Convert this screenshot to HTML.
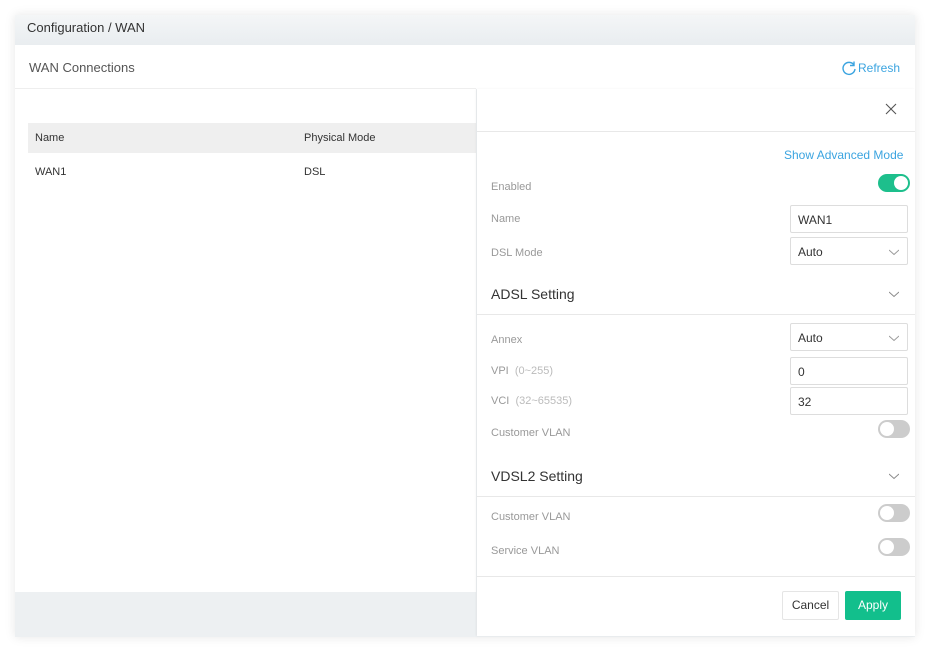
<!DOCTYPE html>
<html><head><meta charset="utf-8"><style>
*{box-sizing:border-box;margin:0;padding:0}
body{width:931px;height:652px;background:#fff;font-family:"Liberation Sans",sans-serif;position:relative;overflow:hidden;color:#333}
.a{position:absolute}
.lbl{position:absolute;left:491px;font-size:11px;color:#999}
.inp{position:absolute;left:790px;width:118px;height:28px;border:1px solid #ddd;border-radius:2px;font-size:12px;color:#333;padding:7px 7px}
.tog{position:absolute;left:878px;width:32px;height:18px;border-radius:9px;background:#ccc}
.tog:after{content:"";position:absolute;left:2px;top:2px;width:14px;height:14px;border-radius:50%;background:#fff}
.tog.on{background:#1dbf8c}.tog.on:after{left:16px}
.chev{position:absolute;width:10px;height:10px}
.hr{position:absolute;left:477px;width:438px;height:1px;background:#e8e8e8}
.sec{position:absolute;left:491px;font-size:14px;color:#333}
</style></head><body>
<div class="a" style="left:15px;top:15px;width:900px;height:622px;box-shadow:0 0 10px rgba(0,0,0,.10)"></div>
<div class="a" style="left:15px;top:15px;width:900px;height:622px;background:#edf0f2"></div>
<div class="a" style="left:15px;top:15px;width:900px;height:30px;background:linear-gradient(#f4f6f7,#e9edf0)"></div>
<div class="a" style="left:27px;top:20px;font-size:13px;color:#333">Configuration / WAN</div>
<div class="a" style="left:15px;top:45px;width:900px;height:44px;background:#fff"></div>
<div class="a" style="left:29px;top:60px;font-size:13px;color:#555">WAN Connections</div>
<svg class="a" style="left:841px;top:60px" width="16" height="16" viewBox="0 0 16 16"><path d="M13 5A6 6 0 1 0 14 9" fill="none" stroke="#3ba4e0" stroke-width="1.4"/><path d="M13 1.5V5.5H9" fill="none" stroke="#3ba4e0" stroke-width="1.4"/></svg>
<div class="a" style="left:858px;top:61px;font-size:12px;color:#3ba4e0">Refresh</div>
<div class="a" style="left:15px;top:88px;width:461px;height:504px;background:#fff;border-top:1px solid #eee"></div>
<div class="a" style="left:28px;top:123px;width:448px;height:30px;background:#efefef"></div>
<div class="a" style="left:35px;top:132px;font-size:11px;color:#333">Name</div>
<div class="a" style="left:304px;top:132px;font-size:11px;color:#333">Physical Mode</div>
<div class="a" style="left:35px;top:166px;font-size:11px;color:#333">WAN1</div>
<div class="a" style="left:304px;top:166px;font-size:11px;color:#333">DSL</div>
<div class="a" style="left:477px;top:89px;width:438px;height:547px;background:#fff;box-shadow:-1px 0 2px rgba(0,0,0,.05)"></div>
<svg class="a" style="left:885px;top:103px" width="12" height="12" viewBox="0 0 12 12"><path d="M1 1L11 11M11 1L1 11" stroke="#555" stroke-width="1.1"/></svg>
<div class="hr" style="top:131px"></div>
<div class="a" style="left:784px;top:148px;font-size:12px;color:#3ba4e0">Show Advanced Mode</div>
<div class="lbl" style="top:181px">Enabled</div>
<div class="tog on" style="top:174px"></div>
<div class="lbl" style="top:213px">Name</div>
<div class="inp" style="top:205px">WAN1</div>
<div class="lbl" style="top:247px">DSL Mode</div>
<div class="inp" style="top:237px">Auto</div>
<svg class="chev" style="left:889px;top:247px" viewBox="0 0 10 10"><path d="M0 3L5 7.5L10 3" fill="none" stroke="#999"/></svg>
<div class="sec" style="top:286px">ADSL Setting</div>
<svg class="chev" style="left:889px;top:289px" viewBox="0 0 10 10"><path d="M0 3L5 7.5L10 3" fill="none" stroke="#888"/></svg>
<div class="hr" style="top:314px"></div>
<div class="lbl" style="top:334px">Annex</div>
<div class="inp" style="top:323px">Auto</div>
<svg class="chev" style="left:889px;top:333px" viewBox="0 0 10 10"><path d="M0 3L5 7.5L10 3" fill="none" stroke="#999"/></svg>
<div class="lbl" style="top:365px">VPI <span style="color:#bbb">&nbsp;(0~255)</span></div>
<div class="inp" style="top:357px">0</div>
<div class="lbl" style="top:395px">VCI <span style="color:#bbb">&nbsp;(32~65535)</span></div>
<div class="inp" style="top:387px">32</div>
<div class="lbl" style="top:427px">Customer VLAN</div>
<div class="tog" style="top:420px"></div>
<div class="sec" style="top:468px">VDSL2 Setting</div>
<svg class="chev" style="left:889px;top:471px" viewBox="0 0 10 10"><path d="M0 3L5 7.5L10 3" fill="none" stroke="#888"/></svg>
<div class="hr" style="top:496px"></div>
<div class="lbl" style="top:511px">Customer VLAN</div>
<div class="tog" style="top:504px"></div>
<div class="lbl" style="top:545px">Service VLAN</div>
<div class="tog" style="top:538px"></div>
<div class="hr" style="top:576px"></div>
<div class="a" style="left:782px;top:591px;width:57px;height:29px;border:1px solid #e5e5e5;border-radius:2px;font-size:12px;color:#333;text-align:center;line-height:27px">Cancel</div>
<div class="a" style="left:845px;top:591px;width:56px;height:29px;background:#12bf8c;border-radius:2px;font-size:12px;color:#fff;text-align:center;line-height:29px">Apply</div>
</body></html>
